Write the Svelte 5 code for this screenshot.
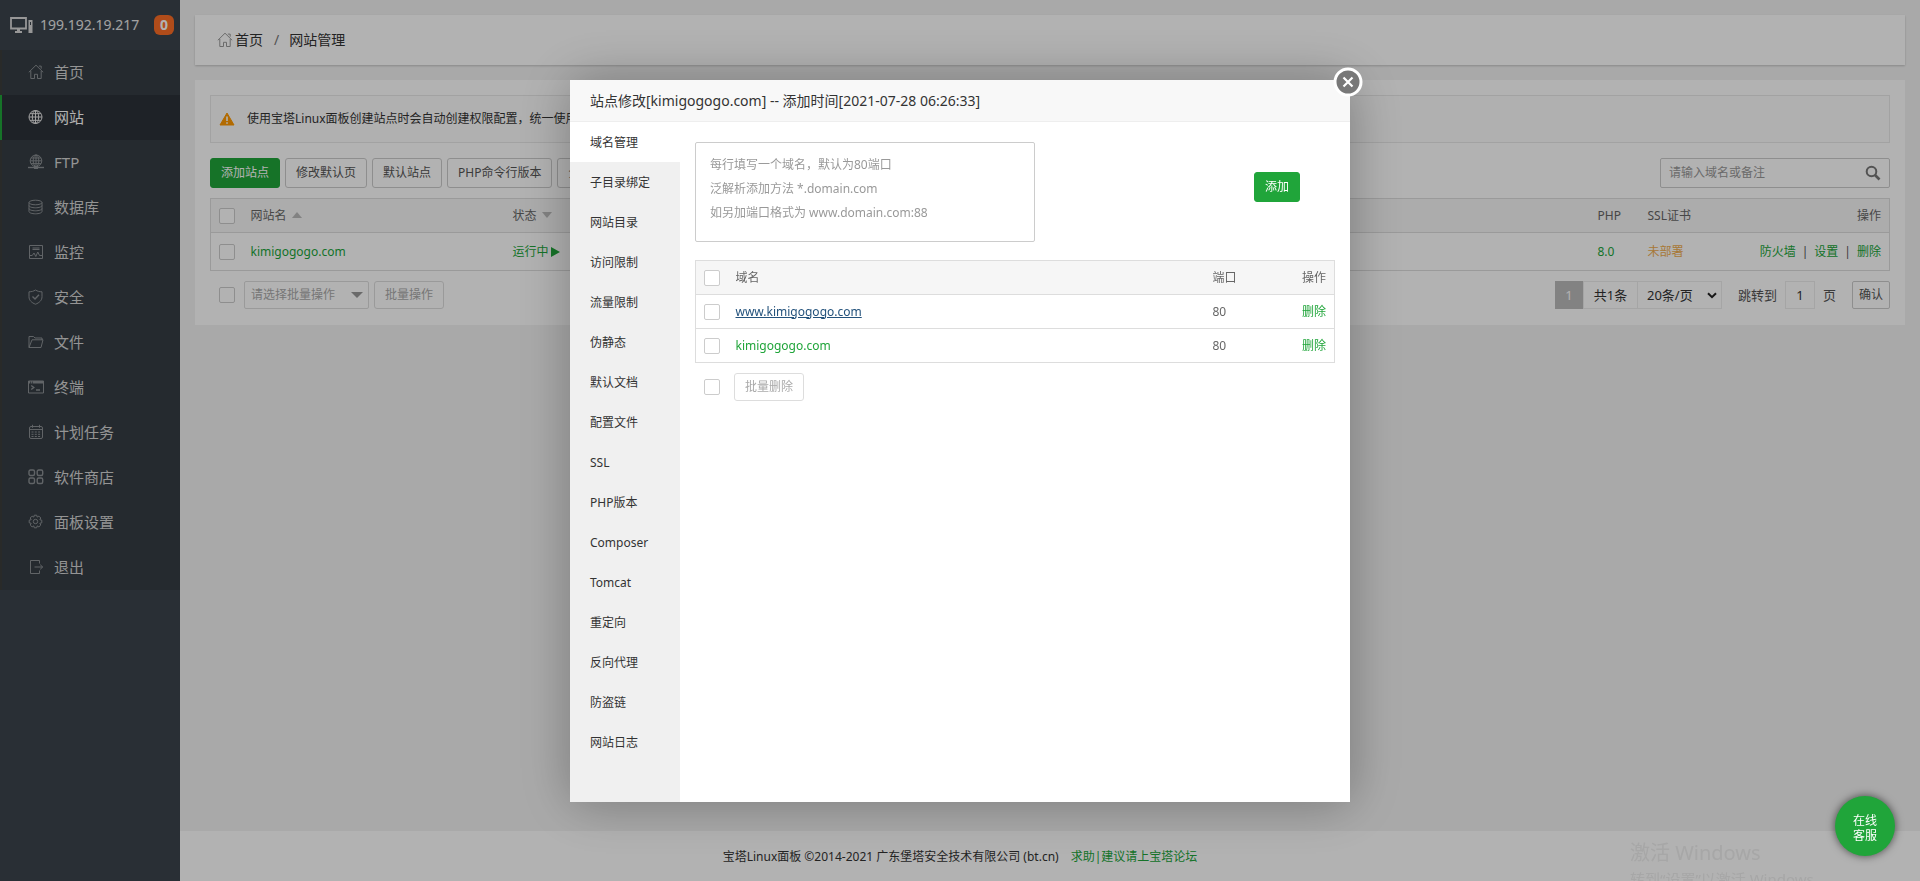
<script>
  const nav = [
    { label: '首页', icon: 'home' },
    { label: '网站', icon: 'globe', active: true },
    { label: 'FTP', icon: 'ftp' },
    { label: '数据库', icon: 'database' },
    { label: '监控', icon: 'monitor' },
    { label: '安全', icon: 'shield' },
    { label: '文件', icon: 'folder' },
    { label: '终端', icon: 'terminal' },
    { label: '计划任务', icon: 'calendar' },
    { label: '软件商店', icon: 'grid' },
    { label: '面板设置', icon: 'gear' },
    { label: '退出', icon: 'exit' }
  ];

  const tabs = [
    '域名管理', '子目录绑定', '网站目录', '访问限制', '流量限制', '伪静态', '默认文档', '配置文件',
    'SSL', 'PHP版本', 'Composer', 'Tomcat', '重定向', '反向代理', '防盗链', '网站日志'
  ];

  const domains = [
    { name: 'www.kimigogogo.com', port: 80, hovered: true },
    { name: 'kimigogogo.com', port: 80 }
  ];

  const hint = '每行填写一个域名，默认为80端口\n泛解析添加方法 *.domain.com\n如另加端口格式为 www.domain.com:88';
</script>

{#snippet icon(name)}
  <svg class="icon" viewBox="0 0 16 16" width="16" height="16" fill="none" stroke="currentColor" stroke-width="1" aria-hidden="true">
    {#if name === 'home'}
      <path d="M.8 8.3 8 1.2l7.2 7.1M2.8 7v7.5h3.7v-4.2h3v4.2h3.7V7M10.8 2.1h2.4v2.6" />
    {:else if name === 'globe'}
      <circle cx="7.5" cy="8" r="6.5" />
      <ellipse cx="7.5" cy="8" rx="3.2" ry="6.5" />
      <path d="M7.5 1.5v13M1 8h13M2 4.7h11M2 11.3h11" />
    {:else if name === 'ftp'}
      <circle cx="8" cy="6.8" r="5.8" />
      <ellipse cx="8" cy="6.8" rx="2.8" ry="5.8" />
      <path d="M8 1v12M2.2 6.8h11.6M3 4h10M3 9.6h10" />
      <path d="M0 13.5h16" stroke-width="1.4" />
      <path d="M6 13.5h4" stroke-width="3" />
    {:else if name === 'database'}
      <ellipse cx="7.5" cy="3.5" rx="6.5" ry="2.3" />
      <path d="M1 3.5v9c0 1.3 2.9 2.3 6.5 2.3s6.5-1 6.5-2.3v-9M1 6.5c0 1.3 2.9 2.3 6.5 2.3S14 7.8 14 6.5M1 9.5c0 1.3 2.9 2.3 6.5 2.3s6.5-1 6.5-2.3" />
    {:else if name === 'monitor'}
      <path d="M1.5 1.500h13v13h-13zM4.500 4h7M4.500 5.500h7M2 11.500h2.200L6 9l1.800 3.500 2-4.500 1.700 3.500H14" />
    {:else if name === 'shield'}
      <path d="M7.500 1c2 1.300 4 1.800 6.500 1.800v5c0 3.400-2.600 6-6.500 7.400C3.600 13.800 1 11.200 1 7.800v-5C3.500 2.800 5.500 2.300 7.500 1z" />
      <path d="m4.500 7.500 2.500 2.500 4-4.200" stroke-width="1.400" />
    {:else if name === 'folder'}
      <path d="M1 13.500v-11h4.500L7 4h7v2M1 13.500h12L15 5.800H4L1 13.500z" />
    {:else if name === 'terminal'}
      <path d="M.5 2h15v12H.5z" />
      <path d="M.5 3.200h15" stroke-width="2.400" stroke-dasharray="1.500 .7 1.200 .7 20" />
      <path d="m3.200 6.500 2.600 2-2.600 2M8 11h4" stroke-width="1.400" />
    {:else if name === 'calendar'}
      <rect x="1.500" y="2.500" width="13" height="12" rx="1.500" />
      <path d="M1.500 5.500h13M4.500 .8v3M11.500 .8v3" />
      <path d="M3.500 8h9M3.500 10.300h9M3.500 12.500h9" stroke-dasharray="2 1.300" />
    {:else if name === 'grid'}
      <g stroke-width="1.400"><rect x="1" y="1" width="5.500" height="5.500" rx="1.500" /><rect x="9.200" y="1" width="5.500" height="5.500" rx="1.500" /><rect x="1" y="9" width="5.500" height="5.500" rx="1.500" /><rect x="9.200" y="9" width="5.500" height="5.500" rx="1.500" /></g>
    {:else if name === 'gear'}
      <path d="M6.300 1.200h2.400l.5 1.900 1.700-1 1.900 1.900-1 1.700 2 .5v2.600l-2 .5 1 1.700-1.900 1.900-1.700-1-.5 1.900H6.300l-.5-1.900-1.700 1L2.200 11l1-1.700-2-.5V6.200l2-.5-1-1.700 1.900-1.900 1.700 1z" />
      <circle cx="7.500" cy="7.500" r="2.200" />
    {:else if name === 'exit'}
      <path d="M11.500 4.500v-3h-9v13h9v-3M6.500 8h8M12.200 5.700 14.700 8l-2.500 2.300" />
    {/if}
  </svg>
{/snippet}

<div class="page">
  <aside class="sidebar">
    <div class="server">
      <svg width="23" height="17" viewBox="0 0 23 17" aria-hidden="true">
        <path d="M1 1h15v10.500H1z" fill="none" stroke="currentColor" stroke-width="1.800" />
        <path d="M7 12h3v2h2v2H5v-2h2z" fill="currentColor" />
        <path fill-rule="evenodd" d="M18.500 3h4v13h-4zM20 5v3h1V5z" fill="currentColor" />
      </svg>
      <span class="ip">199.192.19.217</span>
      <span class="count">0</span>
    </div>
    <nav class="menu">
      {#each nav as item}
        <a href="#{item.icon}" class:active={item.active}>{@render icon(item.icon)}<span>{item.label}</span></a>
      {/each}
    </nav>
  </aside>

  <div class="content">
    <main>
      <div class="crumbs">
        {@render icon('home')}<a href="#home">首页</a><span class="sep">/</span><a href="#sites">网站管理</a>
      </div>

      <section class="panel">
        <div class="notice">
          <svg width="16" height="14" viewBox="0 0 16 14" aria-hidden="true">
            <path d="M8 1 15 13H1z" fill="#f90" stroke="#f90" stroke-linejoin="round" />
            <path d="M8 4.500v4.500M8 10.200v1.600" stroke="#fff" stroke-width="1.600" />
          </svg>
          <span>使用宝塔Linux面板创建站点时会自动创建权限配置，统一使用www用户。</span>
        </div>

        <div class="toolbar">
          <button class="btn primary">添加站点</button>
          <button class="btn">修改默认页</button>
          <button class="btn">默认站点</button>
          <button class="btn">PHP命令行版本</button>
          <button class="btn">全部分类</button>
          <div class="search">
            <input type="text" placeholder="请输入域名或备注" aria-label="请输入域名或备注" />
            <button aria-label="搜索">
              <svg width="16" height="16" viewBox="0 0 16 16" fill="none" stroke="#777" aria-hidden="true">
                <circle cx="6.500" cy="6.500" r="4.800" stroke-width="2" /><path d="m10 10 4.500 4.500" stroke-width="2.600" />
              </svg>
            </button>
          </div>
        </div>

        <table class="sites">
          <thead>
            <tr>
              <th class="check"><input type="checkbox" aria-label="全选" /></th>
              <th class="name">网站名<i class="caret up"></i></th>
              <th>状态<i class="caret down"></i></th>
              <th class="php">PHP</th>
              <th class="ssl">SSL证书</th>
              <th class="ops">操作</th>
            </tr>
          </thead>
          <tbody>
            <tr>
              <td class="check"><input type="checkbox" aria-label="kimigogogo.com" /></td>
              <td><a href="#site">kimigogogo.com</a></td>
              <td><a class="state" href="#state">运行中<i></i></a></td>
              <td><a href="#php">8.0</a></td>
              <td><a class="warn" href="#ssl">未部署</a></td>
              <td class="ops"><a href="#waf">防火墙</a><b>|</b><a href="#set">设置</a><b>|</b><a href="#del">删除</a></td>
            </tr>
          </tbody>
        </table>

        <div class="below">
          <input type="checkbox" aria-label="全选站点" />
          <div class="pick">
            <select aria-label="批量操作" disabled><option>请选择批量操作</option></select>
          </div>
          <button class="btn batch" disabled>批量操作</button>
          <div class="pager">
            <span class="current">1</span>
            <span class="total">共1条</span>
            <div class="size">
              <select aria-label="每页条数"><option>20条/页</option></select>
              <svg width="10" height="7" viewBox="0 0 10 7" fill="none" stroke="#222" stroke-width="2" aria-hidden="true"><path d="m1 1.200 4 4 4-4" /></svg>
            </div>
            <label for="jump">跳转到</label>
            <input id="jump" type="text" value="1" />
            <span class="unit">页</span>
            <button class="confirm">确认</button>
          </div>
        </div>
      </section>
    </main>
  </div>

  <footer>
    <span>宝塔Linux面板 ©2014-2021 广东堡塔安全技术有限公司 (bt.cn)</span>
    <a href="#bbs">求助|建议请上宝塔论坛</a>
  </footer>
</div>

<div class="watermark">
  <div class="big">激活 Windows</div>
  <div>转到“设置”以激活 Windows</div>
</div>

<div class="shade"></div>

<div class="layer">
  <div class="dialog" role="dialog" aria-labelledby="dialog-title">
    <h2 id="dialog-title">站点修改[kimigogogo.com] -- 添加时间[2021-07-28 06:26:33]</h2>
    <button class="close" aria-label="关闭">
      <svg width="30" height="30" viewBox="0 0 30 30" aria-hidden="true">
        <circle cx="15" cy="15" r="13" fill="#787878" stroke="#fff" stroke-width="3" />
        <path d="m10.500 10.500 9 9m0-9-9 9" stroke="#fff" stroke-width="2.200" />
      </svg>
    </button>
    <div class="body">
      <nav class="tabs">
        {#each tabs as tab, i}
          <button class:on={i === 0}>{tab}</button>
        {/each}
      </nav>
      <div class="pane">
        <div class="entry">
          <textarea placeholder={hint} aria-label="域名"></textarea>
          <button class="btn primary">添加</button>
        </div>
        <table class="domains">
          <thead>
            <tr>
              <th class="check"><input type="checkbox" aria-label="全选域名" /></th>
              <th>域名</th>
              <th class="port">端口</th>
              <th class="ops">操作</th>
            </tr>
          </thead>
          <tbody>
            {#each domains as d}
              <tr>
                <td class="check"><input type="checkbox" aria-label={d.name} /></td>
                <td><a href="#domain" class:hovered={d.hovered}>{d.name}</a></td>
                <td>{d.port}</td>
                <td class="ops"><a href="#remove">删除</a></td>
              </tr>
            {/each}
          </tbody>
        </table>
        <div class="below">
          <input type="checkbox" aria-label="全选列表" />
          <button class="btn batch" disabled>批量删除</button>
        </div>
      </div>
    </div>
  </div>
</div>

<button class="service"><span>在线</span><span>客服</span></button>

<style>
  :global(body) {
    margin: 0;
    background: #f3f3f3;
  }
  :global(#app) {
    font: 12px/18px 'Noto Sans', 'Noto Sans CJK SC', sans-serif;
    color: #333;
  }
  :global(#app *) {
    box-sizing: border-box;
  }
  button,
  input,
  select,
  textarea {
    font: inherit;
    color: inherit;
    margin: 0;
  }
  a {
    color: #20a53a;
    text-decoration: none;
  }
  .icon {
    flex: none;
  }

  .page {
    display: grid;
    grid-template-columns: 180px 1fr;
    grid-template-rows: 1fr 50px;
    min-height: 100vh;
  }
  .sidebar {
    grid-column: 1;
    grid-row: 1 / 3;
    z-index: 1;
    background: #3c444d;
  }
  .server {
    display: flex;
    align-items: center;
    height: 50px;
    padding: 0 6px 0 10px;
    color: #d8d8d8;
  }
  .ip {
    flex: 1;
    padding-left: 7px;
    font-size: 14px;
    line-height: 20px;
    color: #e8e8e8;
  }
  .count {
    width: 20px;
    border-radius: 6px;
    background: #fc6d26;
    color: #fff;
    font-size: 14px;
    font-weight: 700;
    line-height: 20px;
    text-align: center;
  }
  .menu a {
    display: flex;
    align-items: center;
    gap: 10px;
    height: 45px;
    padding: 0 0 2px 26px;
    border-left: 2px solid #3b3d3c;
    background: #353d44;
    color: #d4d4d4;
    font-size: 15px;
  }
  .menu .icon {
    color: #8c9094;
  }
  .menu .active {
    border-color: #20a53a;
    background: #2c3138;
    color: #fff;
  }
  .menu .active .icon {
    color: #e8e8e8;
  }

  .content {
    grid-column: 2;
    grid-row: 1;
    padding: 15px;
  }
  .crumbs {
    display: flex;
    align-items: center;
    height: 50px;
    padding-left: 22px;
    background: #fff;
    box-shadow: 0 1px 2px rgba(0, 0, 0, 0.2);
    font-size: 14px;
  }
  .crumbs a {
    color: #333;
  }
  .crumbs .icon {
    color: #999;
    margin-right: 2px;
  }
  .sep {
    padding: 0 10px 0 11px;
    color: #777;
  }
  .panel {
    margin-top: 15px;
    padding: 15px 15px 16px;
    background: #fff;
  }
  .notice {
    display: flex;
    align-items: center;
    gap: 12px;
    height: 48px;
    padding-left: 8px;
    border: 1px solid #e8e8e8;
    background: #fcfcfc;
  }
  .toolbar {
    display: flex;
    gap: 5px;
    margin: 15px 0 10px;
  }
  .btn {
    height: 30px;
    padding: 0 10px;
    border: 1px solid #ccc;
    border-radius: 3px;
    background: #fff;
    color: #555;
    white-space: nowrap;
  }
  .primary {
    border-color: #20a53a;
    background: #20a53a;
    color: #fff;
  }
  .search {
    display: flex;
    align-items: center;
    width: 230px;
    height: 30px;
    margin-left: auto;
    border: 1px solid #ccc;
    border-radius: 2px;
  }
  .search input {
    flex: 1;
    min-width: 0;
    padding: 0 8px;
    border: 0;
    background: none;
  }
  .search button {
    display: flex;
    padding: 0 8px;
    border: 0;
    background: none;
  }
  ::placeholder {
    color: #999;
    opacity: 1;
  }

  input[type='checkbox'] {
    appearance: none;
    display: block;
    flex: none;
    width: 16px;
    height: 16px;
    border: 1px solid #ccc;
    border-radius: 2px;
    background: #fff;
  }
  table {
    width: 100%;
    border: 1px solid #ddd;
    border-collapse: collapse;
    table-layout: fixed;
    color: #666;
  }
  th,
  td {
    height: 34px;
    padding: 0 8px;
    border-bottom: 1px solid #ddd;
    font-weight: 400;
    text-align: left;
    white-space: nowrap;
  }
  th {
    background: #f6f6f6;
  }
  .sites tbody td {
    height: 38px;
  }
  .check {
    width: 32px;
  }
  .sites .name {
    width: 262px;
  }
  .php {
    width: 50px;
  }
  .ssl {
    width: 80px;
  }
  .sites .ops {
    width: 170px;
  }
  .ops {
    text-align: right;
  }
  .ops b {
    padding: 0 6px;
    color: #555;
    font-weight: 400;
  }
  .caret {
    display: inline-block;
    margin: 0 0 2px 5px;
    border: 5px solid transparent;
  }
  .up {
    border-top: 0;
    border-bottom: 6px solid #bbb;
  }
  .down {
    border-bottom: 0;
    border-top: 6px solid #bbb;
  }
  .state {
    display: inline-flex;
    align-items: center;
    gap: 2px;
  }
  .state i {
    border: 5px solid transparent;
    border-left: 9px solid #20a53a;
    border-right: 0;
  }
  .warn {
    color: #f0ad4e;
  }

  .below {
    display: flex;
    align-items: center;
    margin-top: 10px;
    padding-left: 9px;
  }
  .batch {
    height: 28px;
    border-color: #ddd;
    color: #aaa;
  }
  .pick {
    position: relative;
    margin: 0 5px 0 9px;
  }
  .pick::after {
    content: '';
    position: absolute;
    top: 11px;
    right: 6px;
    border: 6px solid transparent;
    border-top-color: #999;
    border-bottom: 0;
    pointer-events: none;
  }
  .pick select {
    display: block;
    appearance: none;
    width: 125px;
    height: 28px;
    padding: 0 6px;
    border: 1px solid #ddd;
    border-radius: 2px;
    background: #fff;
    color: #aaa;
    opacity: 1;
  }
  .pager {
    display: flex;
    align-items: center;
    margin-left: auto;
    font-size: 13px;
    line-height: 26px;
  }
  .current {
    width: 28px;
    border: 1px solid #bbb;
    background: #bbb;
    color: #fff;
    text-align: center;
  }
  .total {
    width: 55px;
    border: 1px solid #ececec;
    text-align: center;
  }
  .size {
    position: relative;
    margin-left: -1px;
  }
  .size select {
    display: block;
    appearance: none;
    width: 85px;
    height: 28px;
    padding: 0 9px;
    border: 1px solid #ececec;
    border-radius: 0;
    background: #fff;
  }
  .size svg {
    position: absolute;
    top: 11px;
    right: 5px;
    pointer-events: none;
  }
  .pager label,
  .unit {
    color: #555;
  }
  .pager label {
    padding: 0 8px 0 16px;
  }
  .pager input {
    width: 30px;
    height: 28px;
    padding: 0;
    border: 1px solid #ececec;
    text-align: center;
  }
  .unit {
    padding: 0 16px 0 8px;
  }
  .confirm {
    width: 38px;
    height: 28px;
    padding: 0;
    border: 1px solid #ccc;
    border-radius: 2px;
    background: #fff;
    color: #555;
    font-size: 12px;
  }

  footer {
    grid-column: 1 / 3;
    grid-row: 2;
    display: flex;
    align-items: center;
    justify-content: center;
    gap: 12px;
    padding-top: 2px;
    background: #fff;
  }

  .watermark {
    position: fixed;
    right: 0;
    bottom: 0;
    width: 290px;
    height: 42px;
    overflow: hidden;
    color: #efefef;
    font-size: 15px;
    line-height: 24px;
    white-space: nowrap;
  }
  .big {
    font-size: 20px;
    line-height: 28px;
  }
  .shade {
    position: fixed;
    inset: 0;
    z-index: 2;
    background: rgba(0, 0, 0, 0.3);
  }
  .layer {
    position: fixed;
    inset: 0;
    z-index: 3;
    display: flex;
    align-items: flex-start;
    justify-content: center;
    padding-top: 80px;
  }
  .dialog {
    position: relative;
    width: 780px;
    background: #fff;
    box-shadow: 1px 1px 50px rgba(0, 0, 0, 0.3);
  }
  h2 {
    margin: 0;
    padding: 0 20px;
    border-bottom: 1px solid #eee;
    background: #f8f8f8;
    font-size: 14px;
    font-weight: 400;
    line-height: 41px;
  }
  .close {
    position: absolute;
    top: -13px;
    right: -13px;
    display: flex;
    padding: 0;
    border: 0;
    background: none;
  }
  .body {
    display: flex;
  }
  .tabs {
    display: flex;
    flex-direction: column;
    flex: none;
    width: 110px;
    padding-bottom: 40px;
    background: #f0f0f0;
  }
  .tabs button {
    height: 40px;
    padding: 2px 20px 0;
    border: 0;
    background: none;
    text-align: left;
  }
  .tabs .on {
    background: #fff;
  }
  .pane {
    flex: 1;
    min-width: 0;
    padding: 20px 15px;
  }
  .entry {
    display: flex;
    align-items: center;
    justify-content: space-between;
    margin-bottom: 18px;
    padding-right: 35px;
  }
  .entry .btn {
    margin-bottom: 10px;
  }
  textarea {
    display: block;
    width: 340px;
    height: 100px;
    padding: 10px 14px;
    border: 1px solid #ccc;
    border-radius: 2px;
    line-height: 24px;
    resize: none;
    overflow: hidden;
  }
  .port {
    width: 72px;
  }
  .domains .ops {
    width: 58px;
  }
  .hovered {
    color: #23527c;
    text-decoration: underline;
  }
  .domains + .below .batch {
    margin-left: 14px;
  }

  .service {
    position: fixed;
    right: 25px;
    bottom: 25px;
    z-index: 4;
    display: flex;
    flex-direction: column;
    align-items: center;
    justify-content: center;
    width: 60px;
    height: 60px;
    padding: 4px 0 0;
    border: 0;
    border-radius: 50%;
    background: #20a53a;
    box-shadow: 0 0 8px rgba(0, 0, 0, 0.6);
    color: #fff;
    line-height: 15px;
  }
</style>
